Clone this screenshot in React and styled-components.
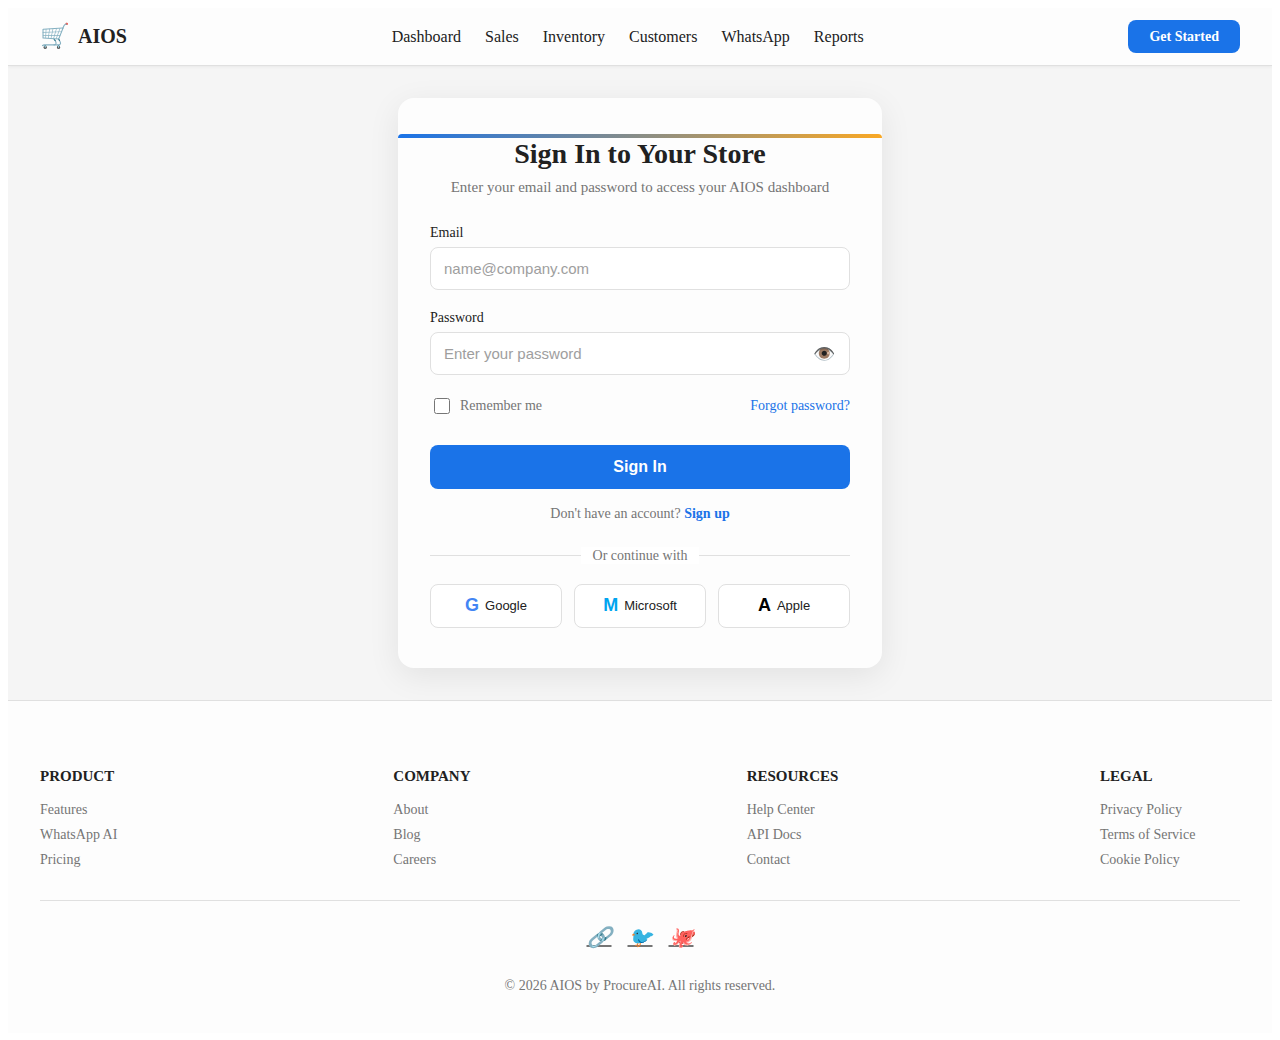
import React, { useState } from 'react';
import styled, { createGlobalStyle, ThemeProvider } from 'styled-components';

const theme = {
  palette: {
    primary: '#1a73e8',
    accent: '#f9a825',
    text: '#212121',
    muted: '#757575',
    border: '#e0e0e0',
    surface: '#fdfdfd',
    page: '#f5f5f5',
    white: '#ffffff',
  },
  serif: '"Liberation Serif", "Times New Roman", serif',
  sans: '"Liberation Sans", Arial, sans-serif',
};

const navLinks = ['Dashboard', 'Sales', 'Inventory', 'Customers', 'WhatsApp', 'Reports'];

const providers = [
  { name: 'Google', mark: 'G', color: '#4285f4' },
  { name: 'Microsoft', mark: 'M', color: '#00a4ef' },
  { name: 'Apple', mark: 'A', color: '#000000' },
];

const footerColumns = [
  { title: 'Product', links: ['Features', 'WhatsApp AI', 'Pricing'] },
  { title: 'Company', links: ['About', 'Blog', 'Careers'] },
  { title: 'Resources', links: ['Help Center', 'API Docs', 'Contact'] },
  { title: 'Legal', links: ['Privacy Policy', 'Terms of Service', 'Cookie Policy'] },
];

const socials = [
  { label: 'Website', glyph: '🔗' },
  { label: 'Twitter', glyph: '🐦' },
  { label: 'GitHub', glyph: '🐙' },
];

const SiteHeader = () => (
  <Header>
    <Logo href="#home">
      <LogoIcon aria-hidden="true">🛒</LogoIcon>
      AIOS
    </Logo>
    <Nav>
      {navLinks.map(name => (
        <NavLink key={name} href={`#${name.toLowerCase()}`}>
          {name}
        </NavLink>
      ))}
    </Nav>
    <GetStarted href="#start">Get Started</GetStarted>
  </Header>
);

const SignInCard = () => {
  const [visible, setVisible] = useState(false);

  return (
    <Card>
      <Stripe />
      <Title>Sign In to Your Store</Title>
      <Subtitle>Enter your email and password to access your AIOS dashboard</Subtitle>
      <form onSubmit={event => event.preventDefault()}>
        <Field>
          <Label htmlFor="email">Email</Label>
          <Input id="email" type="email" placeholder="name@company.com" />
        </Field>
        <Field>
          <Label htmlFor="password">Password</Label>
          <PasswordBox>
            <Input
              id="password"
              type={visible ? 'text' : 'password'}
              placeholder="Enter your password"
            />
            <Toggle
              type="button"
              aria-label="Show password"
              aria-pressed={visible}
              onClick={() => setVisible(!visible)}
            >
              👁️
            </Toggle>
          </PasswordBox>
        </Field>
        <Options>
          <Remember htmlFor="remember">
            <Checkbox id="remember" type="checkbox" />
            Remember me
          </Remember>
          <TextLink href="#forgot">Forgot password?</TextLink>
        </Options>
        <Submit type="submit">Sign In</Submit>
      </form>
      <SignUp>
        Don't have an account?{' '}
        <TextLink href="#signup" $bold>
          Sign up
        </TextLink>
      </SignUp>
      <Divider>
        <span>Or continue with</span>
      </Divider>
      <Providers>
        {providers.map(({ name, mark, color }) => (
          <Provider key={name} type="button">
            <Mark $color={color} aria-hidden="true">
              {mark}
            </Mark>
            {name}
          </Provider>
        ))}
      </Providers>
    </Card>
  );
};

const SiteFooter = () => (
  <Footer>
    <Columns>
      {footerColumns.map(({ title, links }) => (
        <section key={title}>
          <ColumnTitle>{title}</ColumnTitle>
          <LinkList>
            {links.map(name => (
              <li key={name}>
                <FooterLink href="#footer">{name}</FooterLink>
              </li>
            ))}
          </LinkList>
        </section>
      ))}
    </Columns>
    <Socials>
      {socials.map(({ label, glyph }) => (
        <SocialLink key={label} href="#social" aria-label={label}>
          <i>{glyph}</i>
        </SocialLink>
      ))}
    </Socials>
    <Copyright>© 2026 AIOS by ProcureAI. All rights reserved.</Copyright>
  </Footer>
);

const App = () => (
  <ThemeProvider theme={theme}>
    <GlobalStyle />
    <SiteHeader />
    <Main>
      <SignInCard />
    </Main>
    <SiteFooter />
  </ThemeProvider>
);

// Component Styles
const GlobalStyle = createGlobalStyle`
  *, *::before, *::after {
    box-sizing: border-box;
  }
  body {
    margin: 8px;
    background: ${({ theme: { palette } }) => palette.white};
    color: ${({ theme: { palette } }) => palette.text};
    font-family: ${({ theme: { serif } }) => serif};
    font-size: 16px;
  }
`;

const Header = styled.header`
  position: relative;
  display: flex;
  align-items: center;
  justify-content: space-between;
  padding: 12px 32px;
  background: ${({ theme: { palette } }) => palette.surface};
  border-bottom: 1px solid ${({ theme: { palette } }) => palette.border};
  box-shadow: 0 1px 3px rgba(0, 0, 0, 0.05);
`;

const Logo = styled.a`
  display: flex;
  align-items: center;
  gap: 8px;
  color: inherit;
  font-size: 20px;
  font-weight: 700;
  line-height: 33px;
  text-decoration: none;
`;

const LogoIcon = styled.span`
  font-size: 24px;
`;

const Nav = styled.nav`
  display: flex;
  gap: 24px;
`;

const NavLink = styled.a`
  color: inherit;
  text-decoration: none;
`;

const GetStarted = styled.a`
  padding: 8px 21px;
  border-radius: 8px;
  background: ${({ theme: { palette } }) => palette.primary};
  color: ${({ theme: { palette } }) => palette.white};
  font-size: 14px;
  font-weight: 700;
  line-height: 17px;
  text-decoration: none;
`;

const Main = styled.main`
  display: flex;
  justify-content: center;
  padding: 32px;
  background: ${({ theme: { palette } }) => palette.page};
`;

const Card = styled.div`
  width: 100%;
  max-width: 484px;
  padding: 36px 32px 40px;
  border-radius: 16px;
  background: ${({ theme: { palette } }) => palette.surface};
  box-shadow: 0 8px 32px rgba(0, 0, 0, 0.08);
`;

const Stripe = styled.div`
  height: 4px;
  margin: 0 -32px;
  border-radius: 16px 16px 0 0;
  background: linear-gradient(
    90deg,
    ${({ theme: { palette } }) => palette.primary},
    ${({ theme: { palette } }) => palette.accent}
  );
`;

const Title = styled.h1`
  margin: 0 0 8px;
  font-size: 28px;
  line-height: 32px;
  text-align: center;
`;

const Subtitle = styled.p`
  margin: 0 0 28px;
  color: ${({ theme: { palette } }) => palette.muted};
  font-size: 15px;
  line-height: 19px;
  text-align: center;
`;

const Field = styled.div`
  margin-bottom: 20px;
`;

const Label = styled.label`
  display: block;
  margin-bottom: 6px;
  font-size: 14px;
  line-height: 16px;
`;

const Input = styled.input`
  display: block;
  width: 100%;
  height: 43px;
  padding: 0 13px;
  border: 1px solid ${({ theme: { palette } }) => palette.border};
  border-radius: 8px;
  background: ${({ theme: { palette } }) => palette.white};
  color: inherit;
  font-family: ${({ theme: { sans } }) => sans};
  font-size: 15px;
  &::placeholder {
    color: #9e9e9e;
  }
`;

const PasswordBox = styled.div`
  position: relative;
`;

const Toggle = styled.button`
  position: absolute;
  top: 0;
  right: 8px;
  height: 100%;
  padding: 0 7px;
  border: 0;
  background: none;
  font-family: ${({ theme: { sans } }) => sans};
  font-size: 18px;
  cursor: pointer;
`;

const Options = styled.div`
  display: flex;
  align-items: center;
  justify-content: space-between;
  margin: 20px 0 28px;
  font-size: 14px;
  line-height: 22px;
`;

const Remember = styled.label`
  display: flex;
  align-items: center;
  gap: 6px;
  color: ${({ theme: { palette } }) => palette.muted};
`;

const Checkbox = styled.input`
  width: 16px;
  height: 16px;
  margin: 0 4px;
`;

const TextLink = styled.a`
  color: ${({ theme: { palette } }) => palette.primary};
  font-weight: ${({ $bold }) => ($bold ? 700 : 400)};
  text-decoration: none;
`;

const Submit = styled.button`
  width: 100%;
  height: 44px;
  border: 0;
  border-radius: 8px;
  background: ${({ theme: { palette } }) => palette.primary};
  color: ${({ theme: { palette } }) => palette.white};
  font-family: ${({ theme: { sans } }) => sans};
  font-size: 16px;
  font-weight: 700;
  cursor: pointer;
`;

const SignUp = styled.p`
  margin: 16px 0 24px;
  color: ${({ theme: { palette } }) => palette.muted};
  font-size: 14px;
  line-height: 18px;
  text-align: center;
`;

const Divider = styled.div`
  display: flex;
  align-items: center;
  margin-bottom: 20px;
  color: ${({ theme: { palette } }) => palette.muted};
  font-size: 14px;
  line-height: 17px;
  span {
    padding: 0 12px;
    background: ${({ theme: { palette } }) => palette.white};
  }
  &::before,
  &::after {
    content: '';
    flex: 1;
    border-top: 1px solid ${({ theme: { palette } }) => palette.border};
  }
`;

const Providers = styled.div`
  display: grid;
  grid-template-columns: repeat(3, 1fr);
  gap: 12px;
`;

const Provider = styled.button`
  display: flex;
  align-items: center;
  justify-content: center;
  gap: 6px;
  height: 44px;
  padding: 0 8px 2px;
  border: 1px solid ${({ theme: { palette } }) => palette.border};
  border-radius: 8px;
  background: ${({ theme: { palette } }) => palette.white};
  color: ${({ theme: { palette } }) => palette.text};
  font-family: ${({ theme: { sans } }) => sans};
  font-size: 13px;
  cursor: pointer;
`;

const Mark = styled.span`
  color: ${({ $color }) => $color};
  font-size: 18px;
  font-weight: 700;
`;

const Footer = styled.footer`
  padding: 64px 32px 38px;
  border-top: 1px solid ${({ theme: { palette } }) => palette.border};
  background: ${({ theme: { palette } }) => palette.surface};
  color: ${({ theme: { palette } }) => palette.muted};
  font-size: 14px;
`;

const Columns = styled.div`
  display: grid;
  grid-template-columns: repeat(4, 140px);
  justify-content: space-between;
  padding-bottom: 32px;
  border-bottom: 1px solid ${({ theme: { palette } }) => palette.border};
`;

const ColumnTitle = styled.h2`
  margin: 0 0 14px;
  color: ${({ theme: { palette } }) => palette.text};
  font-size: 15px;
  line-height: 22px;
  text-transform: uppercase;
`;

const LinkList = styled.ul`
  display: grid;
  gap: 8px;
  margin: 0;
  padding: 0;
  line-height: 17px;
  list-style: none;
`;

const FooterLink = styled.a`
  color: inherit;
  text-decoration: none;
`;

const Socials = styled.div`
  display: flex;
  justify-content: center;
  gap: 16px;
  margin: 24px 0 28px;
`;

const SocialLink = styled.a`
  color: inherit;
  font-size: 20px;
  line-height: 24px;
`;

const Copyright = styled.p`
  margin: 0;
  line-height: 18px;
  text-align: center;
`;

export default App;
